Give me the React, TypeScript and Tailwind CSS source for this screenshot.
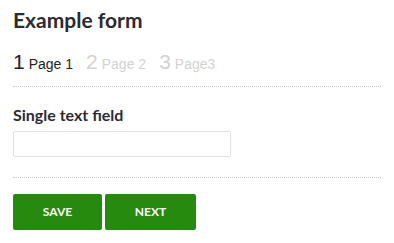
import React from "react";

export default function App() {
  const steps = [
    { n: "1", label: "Page 1", active: true },
    { n: "2", label: "Page 2", active: false },
    { n: "3", label: "Page3", active: false },
  ];
  return (
    <div className="w-[394px] h-[243px] bg-white px-[13px] pt-[8px] box-border overflow-hidden">
      <h1
        className="text-[21px] font-bold leading-[24px] text-[#2b2b33]"
        style={{ fontFamily: "Lato, sans-serif" }}
      >
        Example form
      </h1>
      <div
        className="flex items-baseline mt-[18px] gap-[13px]"
        style={{ fontFamily: "'Liberation Sans', Arial, sans-serif" }}
      >
        {steps.map((s) => (
          <div key={s.n} className={`flex items-baseline gap-[4px] ${s.active ? "text-[#222]" : "text-[#d2d2d2]"}`}>
            <span className="text-[21px] leading-[24px]">{s.n}</span>
            <span className="text-[14px] leading-[16px]">{s.label}</span>
          </div>
        ))}
      </div>
      <div className="mt-[12px] border-t border-dotted border-[#c8c8c8]" />
      <label
        className="block mt-[18px] text-[16px] font-bold leading-[19px] text-[#2b2b33]"
        style={{ fontFamily: "Lato, sans-serif" }}
      >
        Single text field
      </label>
      <input
        type="text"
        className="block mt-[7px] w-[218px] h-[26px] border border-[#e2e2e2] rounded-[2px] outline-none"
      />
      <div className="mt-[20px] border-t border-dotted border-[#c8c8c8]" />
      <div className="flex gap-[3px] mt-[16px]" style={{ fontFamily: "Lato, sans-serif" }}>
        <button className="w-[89px] h-[36px] bg-[#268a0e] rounded-[2px] text-white text-[12px] font-bold">
          SAVE
        </button>
        <button className="w-[91px] h-[36px] bg-[#268a0e] rounded-[2px] text-white text-[12px] font-bold">
          NEXT
        </button>
      </div>
    </div>
  );
}
